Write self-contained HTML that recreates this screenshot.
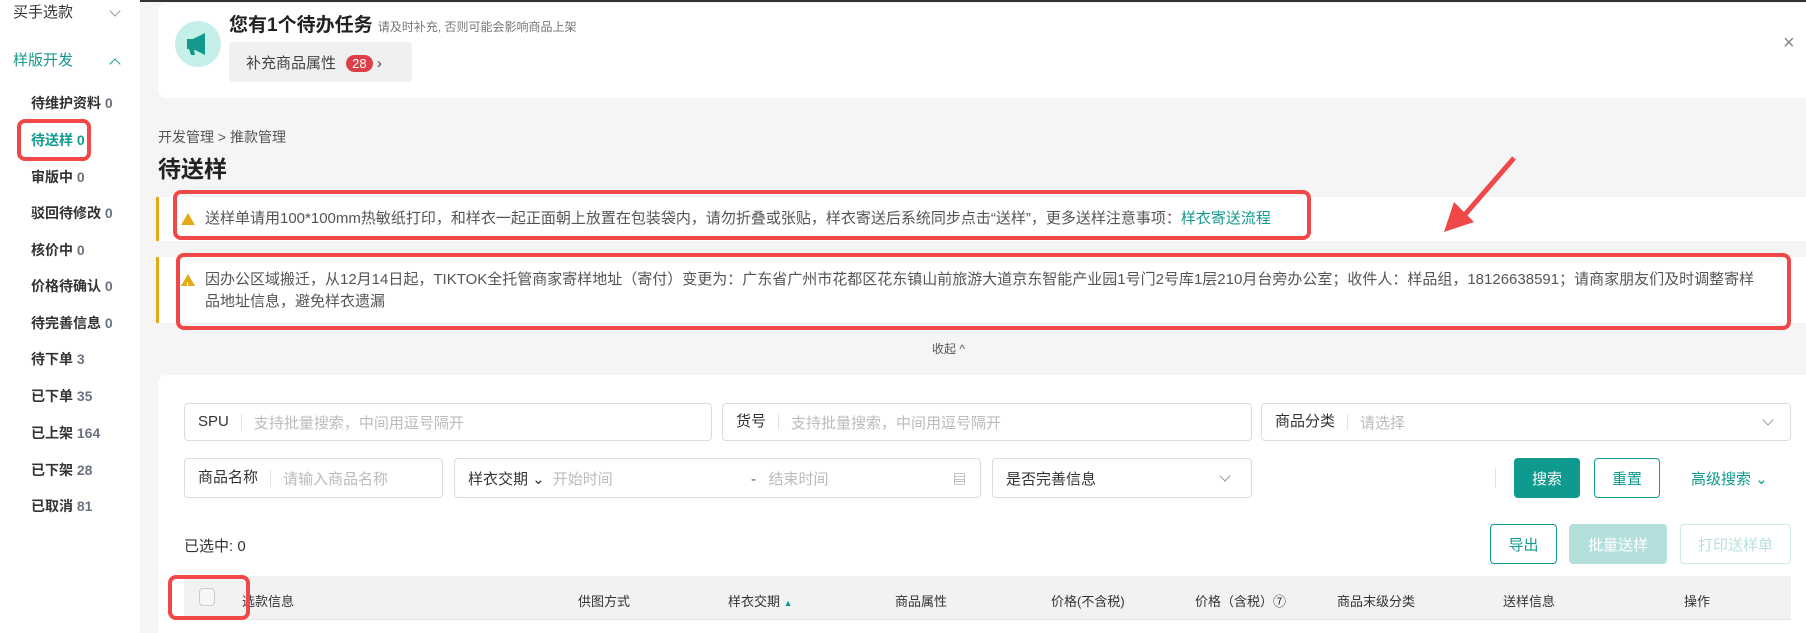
<!DOCTYPE html>
<html><head><meta charset="utf-8"><style>
*{box-sizing:border-box;margin:0;padding:0}
body{width:1806px;height:633px;overflow:hidden;background:#f5f5f5;font-family:"Liberation Sans","Noto Sans CJK SC",sans-serif;color:#333;position:relative}
.a{position:absolute}
.side{left:0;top:0;width:140px;height:633px;background:#fff}
.si{position:absolute;left:31px;font-size:14px;font-weight:bold;color:#333;line-height:18px}
.si b{color:#6b7280;font-weight:bold}
.redbox{position:absolute;border:4px solid #f04848;border-radius:8px}
.inp{position:absolute;border:1px solid #dcdcdc;border-radius:4px;background:#fff;font-size:15px;display:flex;align-items:center;padding-left:13px}
.inp .l{color:#333;padding-right:12px;border-right:1px solid #e3e3e3;line-height:16px;margin-right:12px}
.inp .p{color:#bbb}
.chev{position:absolute;width:8px;height:8px;border-right:1.3px solid #999;border-bottom:1.3px solid #999;transform:rotate(45deg)}
.btn{position:absolute;border-radius:4px;font-size:15px;display:flex;align-items:center;justify-content:center}
.th{position:absolute;top:591px;font-size:13px;color:#333}
.alert{position:absolute;left:156px;right:0;background:#fff;border-left:3px solid #e6a817;font-size:15px;color:#555;padding-left:20px}
.tri{position:absolute;width:0;height:0;border-left:7px solid transparent;border-right:7px solid transparent;border-bottom:12px solid #e6a817}
.tri:after{content:"!";position:absolute;left:-2px;top:1px;font-size:9px;color:#fff;font-weight:bold}
</style></head><body>
<div class="a" style="left:0;top:0;width:1806px;height:2px;background:#333"></div>
<div class="a side">
 <div class="si" style="top:4px;font-weight:normal;font-size:15px;left:13px">买手选款</div>
 <div class="chev" style="left:111px;top:7px"></div>
 <div class="si" style="top:52px;font-weight:normal;font-size:15px;left:13px;color:#14998f">样版开发</div>
 <div class="chev" style="left:111px;top:60px;transform:rotate(225deg);border-color:#14998f"></div>
 <div class="si" style="top:94px">待维护资料 <b>0</b></div>
 <div class="si" style="top:131px;color:#14998f">待送样 <b style="color:#14998f">0</b></div>
 <div class="si" style="top:168px">审版中 <b>0</b></div>
 <div class="si" style="top:204px">驳回待修改 <b>0</b></div>
 <div class="si" style="top:241px">核价中 <b>0</b></div>
 <div class="si" style="top:277px">价格待确认 <b>0</b></div>
 <div class="si" style="top:314px">待完善信息 <b>0</b></div>
 <div class="si" style="top:350px">待下单 <b>3</b></div>
 <div class="si" style="top:387px">已下单 <b>35</b></div>
 <div class="si" style="top:424px">已上架 <b>164</b></div>
 <div class="si" style="top:461px">已下架 <b>28</b></div>
 <div class="si" style="top:497px">已取消 <b>81</b></div>
 <div class="redbox" style="left:17px;top:119px;width:74px;height:42px"></div>
</div>
<div class="a" style="left:158px;top:3px;width:1648px;height:95px;background:#fff;border-radius:8px 0 0 8px"></div>
<div class="a" style="left:175px;top:21px;width:46px;height:46px;border-radius:50%;background:#c5efe9"></div>
<svg class="a" style="left:183px;top:31px" width="30" height="26" viewBox="0 0 30 26"><path d="M4 8h6l12-6v22l-12-6H4z" fill="#14998f"/><path d="M6 18h5l1 6H8z" fill="#14998f"/></svg>
<div class="a" style="left:229px;top:10px;font-size:19px;font-weight:bold;color:#222">您有1个待办任务 <span style="font-size:12px;font-weight:normal;color:#777">请及时补充, 否则可能会影响商品上架</span></div>
<div class="a" style="left:229px;top:42px;width:183px;height:40px;background:#f0f0f0;border-radius:4px;font-size:15px;color:#444;padding:10px 0 0 17px">补充商品属性 <span style="display:inline-block;background:#dc3f48;color:#fff;font-size:13px;border-radius:9px;padding:0 6px;line-height:17px;margin-left:6px">28</span> <span style="font-size:15px">›</span></div>
<div class="a" style="left:1783px;top:32px;font-size:20px;color:#888">×</div>
<div class="a" style="left:158px;top:127px;font-size:14px;color:#555">开发管理 &gt; 推款管理</div>
<div class="a" style="left:158px;top:150px;font-size:23px;font-weight:bold;color:#222">待送样</div>
<div class="alert" style="top:197px;height:44px;line-height:44px"><div class="tri" style="left:22px;top:16px"></div><span style="padding-left:26px">送样单请用100*100mm热敏纸打印，和样衣一起正面朝上放置在包装袋内，请勿折叠或张贴，样衣寄送后系统同步点击“送样”，更多送样注意事项：<span style="color:#14998f">样衣寄送流程</span></span></div>
<div class="redbox" style="left:173px;top:190px;width:1138px;height:50px"></div>
<div class="alert" style="top:257px;height:66px;padding:12px 48px 0 46px;line-height:22px"><div class="tri" style="left:22px;top:17px"></div>因办公区域搬迁，从12月14日起，TIKTOK全托管商家寄样地址（寄付）变更为：广东省广州市花都区花东镇山前旅游大道京东智能产业园1号门2号库1层210月台旁办公室；收件人：样品组，18126638591；请商家朋友们及时调整寄样品地址信息，避免样衣遗漏</div>
<div class="redbox" style="left:176px;top:253px;width:1615px;height:77px"></div>
<div class="a" style="left:932px;top:340px;font-size:12px;color:#555">收起 ^</div>
<svg class="a" style="left:1430px;top:150px" width="100" height="95"><path d="M84 8 L32 68" stroke="#f04848" stroke-width="5"/><path d="M14 82 L24 52 L44 72 Z" fill="#f04848"/></svg>
<div class="a" style="left:158px;top:375px;width:1648px;height:258px;background:#fff;border-radius:8px 0 0 0"></div>
<div class="inp" style="left:184px;top:403px;width:528px;height:38px"><span class="l">SPU</span><span class="p">支持批量搜索，中间用逗号隔开</span></div>
<div class="inp" style="left:722px;top:403px;width:530px;height:38px"><span class="l">货号</span><span class="p">支持批量搜索，中间用逗号隔开</span></div>
<div class="inp" style="left:1261px;top:403px;width:530px;height:38px"><span class="l">商品分类</span><span class="p">请选择</span><div class="chev" style="right:18px;top:12px"></div></div>
<div class="inp" style="left:184px;top:458px;width:259px;height:40px"><span class="l">商品名称</span><span class="p">请输入商品名称</span></div>
<div class="inp" style="left:454px;top:458px;width:527px;height:40px"><span style="color:#333">样衣交期 ⌄</span><span class="p" style="margin-left:8px">开始时间</span><span class="p" style="position:absolute;left:296px"><span style="color:#555">-</span>&nbsp;&nbsp; 结束时间</span><span style="position:absolute;right:14px;color:#888;font-size:13px">▤</span></div>
<div class="inp" style="left:992px;top:458px;width:260px;height:40px"><span style="color:#333">是否完善信息</span><div class="chev" style="right:22px;top:13px"></div></div>
<div class="a" style="left:1495px;top:468px;width:1px;height:20px;background:#e3e3e3"></div>
<div class="btn" style="left:1514px;top:458px;width:66px;height:40px;background:#0f9a8f;color:#fff">搜索</div>
<div class="btn" style="left:1594px;top:458px;width:66px;height:40px;border:1px solid #0f9a8f;color:#0f9a8f">重置</div>
<div class="a" style="left:1691px;top:468px;font-size:15px;color:#0f9a8f">高级搜索 ⌄</div>
<div class="a" style="left:184px;top:535px;font-size:15px;color:#333">已选中: 0</div>
<div class="btn" style="left:1490px;top:524px;width:67px;height:40px;border:1px solid #0f9a8f;color:#0f9a8f">导出</div>
<div class="btn" style="left:1569px;top:524px;width:98px;height:40px;background:#b3e0dc;color:#fff">批量送样</div>
<div class="btn" style="left:1680px;top:524px;width:111px;height:40px;border:1px solid #cdebe8;color:#b8e0dc">打印送样单</div>
<div class="a" style="left:184px;top:576px;width:1607px;height:44px;background:#f2f2f2;border-bottom:1px solid #e5e5e5"></div>
<div class="a" style="left:199px;top:588px;width:16px;height:18px;border:1px solid #ccc;border-radius:4px;background:#f6f6f6"></div>
<div class="th" style="left:242px">选款信息</div>
<div class="th" style="left:578px">供图方式</div>
<div class="th" style="left:728px">样衣交期 <span style="color:#0f9a8f;font-size:9px">▲</span></div>
<div class="th" style="left:895px">商品属性</div>
<div class="th" style="left:1051px">价格(不含税)</div>
<div class="th" style="left:1195px">价格（含税）⑦</div>
<div class="th" style="left:1337px">商品末级分类</div>
<div class="th" style="left:1503px">送样信息</div>
<div class="th" style="left:1684px">操作</div>
<div class="redbox" style="left:168px;top:575px;width:82px;height:45px"></div>
</body></html>
